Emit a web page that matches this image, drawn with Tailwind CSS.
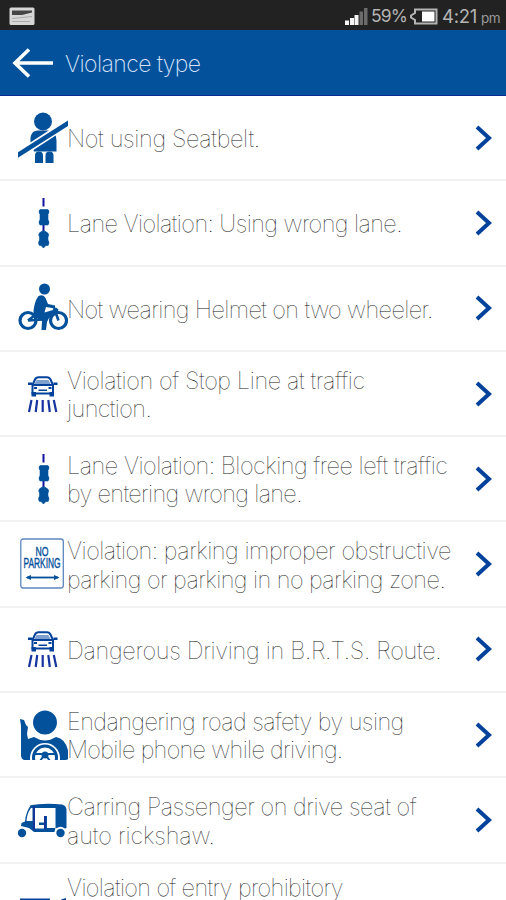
<!DOCTYPE html>
<html lang="en">
<head>
    <meta charset="UTF-8">
    <meta name="viewport" content="width=device-width, initial-scale=1.0">
    <title>Violance type</title>
    <script src="https://cdn.jsdelivr.net/npm/@tailwindcss/browser@4"></script>
</head>
<body class="h-[900px] overflow-hidden bg-white font-['Inter',sans-serif]">
    <!-- shared icons -->
    <svg class="hidden">
        <symbol id="chevron" viewBox="0 0 18 28">
            <path d="M2 3l12 11L2 25" fill="none" stroke="#03429b" stroke-width="4"/>
        </symbol>
        <symbol id="lane" viewBox="0 0 50 52">
            <path d="M25.500 1v8.500M25.500 26v8" stroke="#1414a0" stroke-width="2"/>
            <path d="M22 12.500h8q2 2 0 5v5q2 3 0 5.500h-8q-2-2.500 0-5.500v-5q-2-3 0-5zM22.500 35l3-1.500 3 1.500q3.500 2 1.500 5v3q2 3 0 5.500h-2L25.500 51 23 48.500h-1.500q-2-2.500 0-5.500v-3q-2-3 1-5z" fill="#03509b" stroke="#03509b" stroke-width=".6"/>
        </symbol>
        <symbol id="car" viewBox="0 0 50 52">
            <path d="M14.500 17l2.500-5.500q1-2.300 3.500-2.300h8.500q2.500 0 3.500 2.300L35 17" fill="none" stroke="#03429b" stroke-width="2"/>
            <path d="M18.500 12h12l2 4H16.500z" fill="#7f9fce"/>
            <path d="M10 14.500h4v2.500h-4zM35.500 14.500h4V17h-4z" fill="#03429b"/>
            <path d="M14.500 17h20.500v8.500H14.500z" fill="none" stroke="#03429b" stroke-width="2"/>
            <path d="M13.500 24h4.500v4.500h-4.500zM31.500 24H36v4.500h-4.500zM16 19h3v2h-3zM30.500 19h3v2h-3zM20.500 21.500h8.500v1.500h-8.500z" fill="#03429b"/>
            <path d="M13.500 32l-2.500 12M19.200 32l-1.500 12M24.700 32v12M30.300 32l1.500 12M35.800 32l2.500 12" stroke="#1733a0" stroke-width="2.200"/>
        </symbol>
    </svg>

    <!-- status bar -->
    <div class="flex h-[30px] items-center bg-[#222222] pt-[2px] pr-[6px] pl-[9px] text-[#b4b4b4]">
        <svg class="h-[19px] w-[26px]" viewBox="0 0 26 19">
            <rect x=".5" y=".5" width="25" height="17.500" rx="1.500" fill="#d6d6d6"/>
            <path d="M3 3.500h20v2l-10 2.500H3z" fill="#444"/>
            <path d="M3 11.500l20-2M3 14.500h18" stroke="#aaa"/>
        </svg>
        <svg class="ml-auto h-[19px] w-[24px]" viewBox="0 0 24 19">
            <path d="M1 13.500h4V18H1zM6 11h4v7H6zM10.500 8h4v10h-4z" fill="#f5f5f5"/>
            <path d="M15.500 4.500h3.500V18h-3.500zM20 1h3.500v17H20z" fill="#6b6b6b"/>
        </svg>
        <span class="ml-[3px] w-[38px] text-[17.500px] leading-[20px] tracking-[-0.8px]">59%</span>
        <svg class="h-[17px] w-[29px]" viewBox="0 0 29 17">
            <path d="M6 1.500h21.500v14H6V12L2 9.500v-2L6 5z" fill="#222" stroke="#b4b4b4" stroke-width="2"/>
            <path d="M13 3.500h12.500v10H13z" fill="#fff"/>
        </svg>
        <span class="ml-[4px] w-[39px] pt-px text-[18.500px] tracking-[-0.2px]">4:21</span>
        <span class="pt-[4px] text-[13.500px] tracking-[-0.5px] text-[#9a9a9a]">pm</span>
    </div>

    <!-- title bar -->
    <div class="flex h-[66px] items-center border-b border-[#0a2f94] bg-[#03519b] pl-[12px] text-[#d5e2fa]">
        <svg class="h-[30px] w-[42px]" viewBox="0 0 42 30">
            <path d="M41 15H3M17 1.500L3 15l14 13.500" fill="none" stroke="#fff" stroke-width="3.600"/>
        </svg>
        <h1 class="ml-[11px] pt-[3px] text-[23px] font-extralight"><span class="tracking-[-0.6px]">Violance type</span></h1>
    </div>

    <ul class="text-[23.500px] leading-[28.500px] font-thin whitespace-nowrap text-[#111]">
        <li class="flex h-[85.300px] items-center border-b-2 border-[#f1f1f1] pr-[13px] pl-[18px]">
            <svg class="h-[52px] w-[50px] shrink-0" viewBox="0 0 50 52" fill="#03509b">
                <circle cx="25" cy="9.500" r="9"/>
                <path d="M12.500 30q-1-11.500 8-11.500h9q9 0 9 10v11H16z"/>
                <path d="M17 51V43.500q0-4 4-4t4 4V51zM27.500 51V43.500q0-4 4-4t4 4V51z"/>
                <path d="M-1 44L51 10" stroke="#fff" stroke-width="8"/>
                <path d="M-.5 40.500L50 8.500v5.500L-.5 46z"/>
            </svg>
            <p class="-ml-px pt-[3px]"><span class="tracking-[-0.34px]">Not using Seatbelt.</span></p>
            <svg class="ml-auto h-[28px] w-[18px] shrink-0"><use href="#chevron"/></svg>
        </li>
        <li class="flex h-[85.300px] items-center border-b-2 border-[#f1f1f1] pr-[13px] pl-[18px]">
            <svg class="h-[52px] w-[50px] shrink-0"><use href="#lane"/></svg>
            <p class="-ml-px pt-[3px]"><span class="tracking-[-0.57px]">Lane Violation: Using wrong lane.</span></p>
            <svg class="ml-auto h-[28px] w-[18px] shrink-0"><use href="#chevron"/></svg>
        </li>
        <li class="flex h-[85.300px] items-center border-b-2 border-[#f1f1f1] pr-[13px] pl-[18px]">
            <svg class="h-[52px] w-[50px] shrink-0" viewBox="0 0 50 52" fill="#03509b">
                <circle cx="26.500" cy="7" r="5.500"/>
                <path d="M20.500 14q5-2 7 2l2.500 6 7 1.500v3l-9-1.500-1.500 5.500L35 28l3-2.500 2.500 2L39 32l-8 4-2 4-1 8h-4.500L24 39l-7-4q-2-2-1.500-6 1-10 5-15z"/>
                <circle cx="10" cy="38.500" r="8" fill="none" stroke="#03509b" stroke-width="3.200"/>
                <circle cx="40.500" cy="38.500" r="8" fill="none" stroke="#03509b" stroke-width="3.200"/>
                <path d="M10 38.500l14-1M40.500 38.500L36 26M10 38.500l9-7" fill="none" stroke="#03509b" stroke-width="2.600"/>
            </svg>
            <p class="-ml-px pt-[4px]"><span class="tracking-[-0.62px]">Not wearing Helmet on two wheeler.</span></p>
            <svg class="ml-auto h-[28px] w-[18px] shrink-0"><use href="#chevron"/></svg>
        </li>
        <li class="flex h-[85.300px] items-center border-b-2 border-[#f1f1f1] pr-[13px] pl-[18px]">
            <svg class="h-[52px] w-[50px] shrink-0"><use href="#car"/></svg>
            <p class="-ml-px pt-[3px]"><span class="tracking-[-0.38px]">Violation of Stop Line at traffic</span><br><span class="tracking-[-0.6px]">junction.</span></p>
            <svg class="ml-auto h-[28px] w-[18px] shrink-0"><use href="#chevron"/></svg>
        </li>
        <li class="flex h-[85.300px] items-center border-b-2 border-[#f1f1f1] pr-[13px] pl-[18px]">
            <svg class="h-[52px] w-[50px] shrink-0"><use href="#lane"/></svg>
            <p class="-ml-px pt-[3px]"><span class="tracking-[-0.48px]">Lane Violation: Blocking free left traffic</span><br><span class="tracking-[-0.67px]">by entering wrong lane.</span></p>
            <svg class="ml-auto h-[28px] w-[18px] shrink-0"><use href="#chevron"/></svg>
        </li>
        <li class="flex h-[85.300px] items-center border-b-2 border-[#f1f1f1] pr-[13px] pl-[18px]">
            <svg class="h-[52px] w-[50px] shrink-0" viewBox="0 0 50 52" fill="#03509b">
                <rect x="2.800" y="1" width="42.500" height="49" rx="2.500" fill="#fff" stroke="#5c86bd" stroke-width="1.300"/>
                <text x="24" y="17.500" text-anchor="middle" textLength="13" lengthAdjust="spacingAndGlyphs" font-family="Liberation Sans" font-size="13.500" font-weight="400" stroke="#03509b" stroke-width=".4">NO</text>
                <text x="24" y="29.500" text-anchor="middle" textLength="37" lengthAdjust="spacingAndGlyphs" font-family="Liberation Sans" font-size="14" font-weight="400" stroke="#03509b" stroke-width=".4">PARKING</text>
                <path d="M9 39.500h31" stroke="#03509b" stroke-width="1.800"/>
                <path d="M7.500 39.500l5.500-2.600v5.200z"/>
                <path d="M41.500 39.500L36 36.900v5.200z"/>
            </svg>
            <p class="-ml-px pt-[3px]"><span class="tracking-[-0.48px]">Violation: parking improper obstructive</span><br><span class="tracking-[-0.56px]">parking or parking in no parking zone.</span></p>
            <svg class="ml-auto h-[28px] w-[18px] shrink-0"><use href="#chevron"/></svg>
        </li>
        <li class="flex h-[85.300px] items-center border-b-2 border-[#f1f1f1] pr-[13px] pl-[18px]">
            <svg class="h-[52px] w-[50px] shrink-0"><use href="#car"/></svg>
            <p class="-ml-px pt-[3px]"><span class="tracking-[-0.3px]">Dangerous Driving in B.R.T.S. Route.</span></p>
            <svg class="ml-auto h-[28px] w-[18px] shrink-0"><use href="#chevron"/></svg>
        </li>
        <li class="flex h-[85.300px] items-center border-b-2 border-[#f1f1f1] pr-[13px] pl-[18px]">
            <svg class="h-[52px] w-[50px] shrink-0" viewBox="0 0 50 52" fill="#03509b">
                <path d="M2 10l4 1 2 5 2 2-1 7 1 5 6-2q11 7 22 0 12 2 13 21-1 2-4 2H6q-3-1-3-5V17z"/>
                <circle cx="27" cy="13.500" r="12.700" stroke="#fff" stroke-width="1.500"/>
                <circle cx="27" cy="49" r="15" fill="#fff"/>
                <circle cx="27" cy="48.500" r="11.500" fill="none" stroke="#03509b" stroke-width="3"/>
                <circle cx="27" cy="46" r="3.500"/>
                <path d="M16 45h22M27 45l-5 7M27 45l5 7" stroke="#03509b" stroke-width="2"/>
                <path d="M0 51h50v3H0z" fill="#fff"/>
            </svg>
            <p class="-ml-px pt-[3px]"><span class="tracking-[-0.56px]">Endangering road safety by using</span><br><span class="tracking-[-0.69px]">Mobile phone while driving.</span></p>
            <svg class="ml-auto h-[28px] w-[18px] shrink-0"><use href="#chevron"/></svg>
        </li>
        <li class="flex h-[85.300px] items-center border-b-2 border-[#f1f1f1] pr-[13px] pl-[18px]">
            <svg class="h-[52px] w-[50px] shrink-0" viewBox="0 0 50 52" fill="#03509b">
                <path d="M10 11.500q17-3 34-1 4 1 4.500 5V34l-3 1-8-1-1 4H16l-5-4-8-2 .5-3L7 27.500Q8 17 13 11z"/>
                <path d="M13 14h1.500v13H8.500Q9 19 13 14zM17 14h20.500v20H29V22h-3v6.500h-5V31h5v3.500h-9z" fill="#fff"/>
                <path d="M16 12v24M27 22v13" stroke="#1a2f9a" stroke-width="1.600"/>
                <circle cx="4" cy="39" r="4.200"/>
                <circle cx="42.500" cy="38.500" r="5.800" fill="#fff"/>
                <circle cx="42.500" cy="39" r="4.200"/>
            </svg>
            <p class="-ml-px pt-[3px]"><span class="tracking-[-0.47px]">Carring Passenger on drive seat of</span><br><span class="tracking-[-0.15px]">auto rickshaw.</span></p>
            <svg class="ml-auto h-[28px] w-[18px] shrink-0"><use href="#chevron"/></svg>
        </li>
        <li class="flex h-[85.300px] items-start pt-[10px] pr-[13px] pl-[18px]">
            <svg class="h-[52px] w-[50px] shrink-0" viewBox="0 0 50 52" fill="#03429b">
                <path d="M2 24.500h30v20H2zM43 25.500l5-1.500v5h-3z"/>
            </svg>
            <p class="-ml-px"><span class="tracking-[-0.64px]">Violation of entry prohibitory</span></p>
        </li>
    </ul>
</body>
</html>
